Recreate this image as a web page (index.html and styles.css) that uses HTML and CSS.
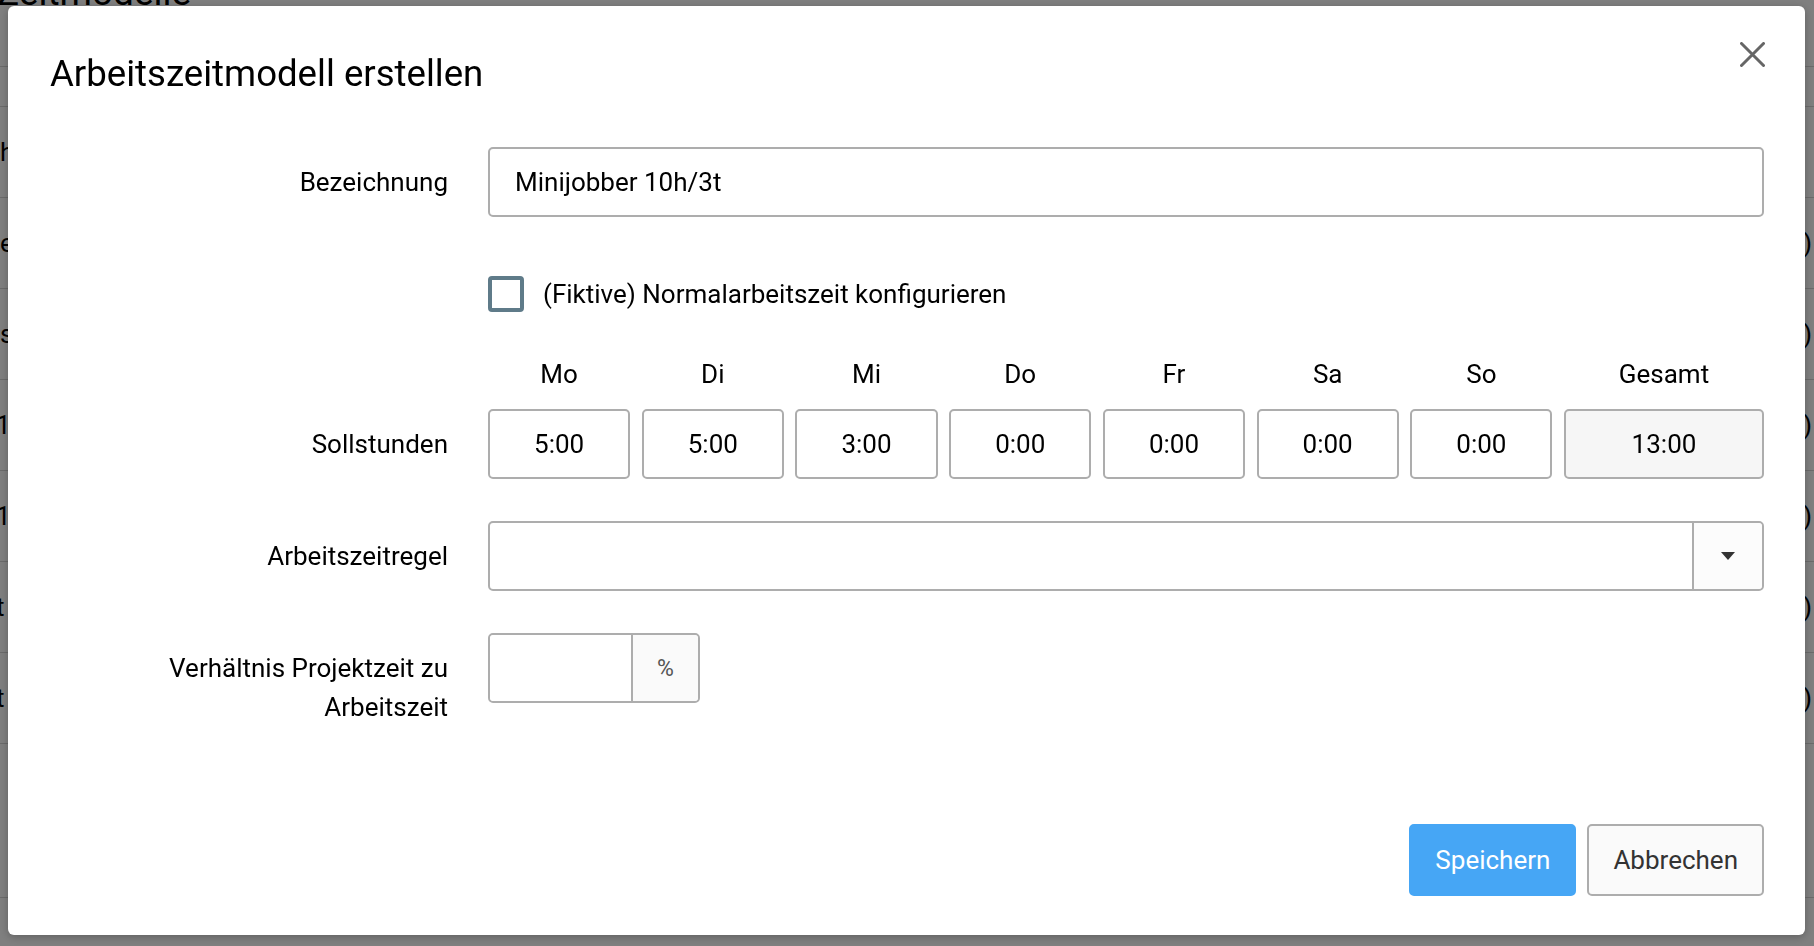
FILE: index.html
```html
<!DOCTYPE html>
<html lang="de">
<head>
  <meta charset="UTF-8">
  <title>Zeitmodelle</title>
  <link rel="stylesheet" href="styles.css">
</head>
<body>
  <!-- Seite hinter dem Dialog -->
  <div class="page">
    <div class="page-head"><h1>Zeitmodelle</h1></div>
    <div class="list-row list-top"></div>
    <div class="list-row"><span>h</span><span></span></div>
    <div class="list-row"><span>e</span><span>)</span></div>
    <div class="list-row"><span>s</span><span>)</span></div>
    <div class="list-row"><span class="num">1</span><span>)</span></div>
    <div class="list-row"><span class="num">1</span><span>)</span></div>
    <div class="list-row"><span class="num">t</span><span>)</span></div>
    <div class="list-row"><span class="num">t</span><span>)</span></div>
    <div class="list-row list-last"></div>
  </div>

  <div class="backdrop">
    <div class="modal">
      <div class="modal-head">
        <h2>Arbeitszeitmodell erstellen</h2>
        <button class="btn-close" type="button" title="Schließen">
          <svg width="25" height="25" viewBox="0 0 25 25"><path d="M1.5 1.5 L23.5 23.5 M23.5 1.5 L1.5 23.5" stroke="#666" stroke-width="3" stroke-linecap="round"/></svg>
        </button>
      </div>

      <form class="modal-body" onsubmit="return false;">
        <div class="field">
          <label class="field-label" for="name">Bezeichnung</label>
          <input class="text-input" id="name" type="text" value="Minijobber 10h/3t">
        </div>

        <div class="field field-check">
          <span></span>
          <label class="check">
            <span class="check-box"></span>
            (Fiktive) Normalarbeitszeit konfigurieren
          </label>
        </div>

        <div class="field field-hours">
          <label class="field-label label-hours">Sollstunden</label>
          <div class="hours">
            <div class="day">Mo</div>
            <div class="day">Di</div>
            <div class="day">Mi</div>
            <div class="day">Do</div>
            <div class="day">Fr</div>
            <div class="day">Sa</div>
            <div class="day">So</div>
            <div class="day">Gesamt</div>
            <input class="hour" type="text" value="5:00">
            <input class="hour" type="text" value="5:00">
            <input class="hour" type="text" value="3:00">
            <input class="hour" type="text" value="0:00">
            <input class="hour" type="text" value="0:00">
            <input class="hour" type="text" value="0:00">
            <input class="hour" type="text" value="0:00">
            <input class="hour hour-total" type="text" value="13:00" readonly>
          </div>
        </div>

        <div class="field">
          <label class="field-label">Arbeitszeitregel</label>
          <div class="select">
            <span class="select-value"></span>
            <span class="select-btn">
              <svg width="16" height="10" viewBox="0 0 16 10"><path d="M1 1 H15 L8 9 Z" fill="#333"/></svg>
            </span>
          </div>
        </div>

        <div class="field">
          <label class="field-label">Verhältnis Projektzeit zu Arbeitszeit</label>
          <div class="input-group">
            <input class="group-input" type="text" value="">
            <span class="group-addon">%</span>
          </div>
        </div>
      </form>

      <div class="modal-foot">
        <button class="btn btn-primary" type="button">Speichern</button>
        <button class="btn btn-default" type="button">Abbrechen</button>
      </div>
    </div>
  </div>
</body>
</html>
```

FILE: styles.css
```css
html, body { margin: 0; height: 100%; overflow: hidden; }
body { font-family: Roboto, "Liberation Sans", sans-serif; font-size: 26px; color: #000; background: #fff; }

/* Seite im Hintergrund */
.page { width: 100%; }
.page-head { display: flow-root; height: 66px; border-bottom: 1px solid #d6d6d6; }
.page-head h1 { margin: -26px 0 0 -3px; font-size: 37px; font-weight: 400; line-height: 37px; }
.list-row { height: 90px; border-bottom: 1px solid #d6d6d6; display: flex; justify-content: space-between; align-items: center; padding: 0 2px 0 0; }
.list-row .num { margin-left: -4px; }
.list-top { height: 39px; }
.list-last { height: 153px; }

/* Dialog */
.backdrop { position: fixed; inset: 0; background: rgba(0, 0, 0, 0.5); padding: 6px 9px 11px 8px; }
.modal { height: 100%; box-sizing: border-box; background: #fff; border-radius: 6px; padding: 40px 41px 39px 42px; display: flex; flex-direction: column; box-shadow: 0 2px 8px rgba(0, 0, 0, 0.25); }

.modal-head { display: flex; justify-content: space-between; align-items: flex-start; }
.modal-head h2 { margin: 0; font-size: 36.6px; font-weight: 400; line-height: 56px; }
.btn-close { border: 0; background: none; padding: 0; margin: -4px -1px 0 0; width: 25px; height: 25px; cursor: pointer; display: block; }
.btn-close svg { display: block; }

.modal-body { margin-top: 45px; }
.field { display: grid; grid-template-columns: 398px 1fr; column-gap: 40px; margin-bottom: 42px; }
.field-label { text-align: right; line-height: 39px; padding-top: 16px; }
.field-check { height: 70px; margin-bottom: 26px; align-items: center; }
.field-hours { margin-bottom: 42px; }
.label-hours { padding-top: 70px; }

input { font-family: inherit; font-size: 26px; color: #000; outline: none; }
.text-input { height: 70px; box-sizing: border-box; border: 2px solid #adadad; border-radius: 5px; padding: 0 25px; width: 100%; }

.check { display: flex; align-items: center; gap: 19px; line-height: 36px; }
.check-box { width: 36px; height: 36px; box-sizing: border-box; border: 4px solid #5f7b89; border-radius: 4px; }

.hours { display: grid; grid-template-columns: repeat(7, 1fr) 200px; column-gap: 11.5px; row-gap: 15px; }
.day { text-align: center; line-height: 39px; }
.hour { height: 70px; min-width: 0; box-sizing: border-box; border: 2px solid #adadad; border-radius: 5px; text-align: center; padding: 0; }
.hour-total { background: #f6f6f6; }

.select { display: flex; height: 70px; box-sizing: border-box; border: 2px solid #adadad; border-radius: 5px; }
.select-value { flex: 1; }
.select-btn { width: 68px; border-left: 2px solid #adadad; display: flex; align-items: center; justify-content: center; background: #fcfcfc; border-radius: 0 4px 4px 0; }
.select-btn svg { display: block; }

.input-group { display: flex; width: 212px; height: 70px; box-sizing: border-box; border: 2px solid #adadad; border-radius: 5px; }
.group-input { width: 141px; border: 0; padding: 0 12px; box-sizing: border-box; border-radius: 4px 0 0 4px; }
.group-addon { flex: 1; border-left: 2px solid #adadad; background: #fafafa; color: #555; font-size: 23px; display: flex; align-items: center; justify-content: center; border-radius: 0 4px 4px 0; }

.modal-foot { margin-top: auto; display: flex; justify-content: flex-end; gap: 11px; }
.btn { height: 72px; box-sizing: border-box; border: 2px solid #adadad; border-radius: 5px; padding: 0 24px; font-family: inherit; font-size: 26px; cursor: pointer; }
.btn-primary { background: #46a6f5; border-color: #46a6f5; color: #fff; }
.btn-default { background: #fafafa; color: #333; }
```
